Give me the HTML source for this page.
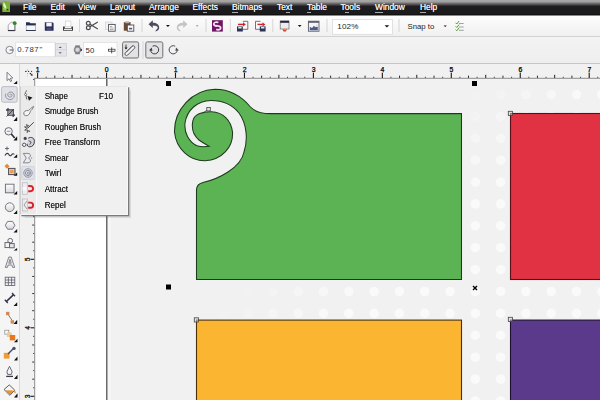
<!DOCTYPE html>
<html><head><meta charset="utf-8">
<style>
*{margin:0;padding:0;box-sizing:border-box}
html,body{width:600px;height:400px;overflow:hidden;background:#efefef;font-family:"Liberation Sans",sans-serif}
.a{position:absolute}
#menubar{left:0;top:0;width:600px;height:15px;background:linear-gradient(#a8a8a8 0px,#a2a2a2 1.5px,#8a8a8a 2.5px,#6c6c6c 3.5px,#524e50 4.5px,#363435 5.5px,#1d1c1e 6.5px,#1b1b1d 13.5px,#111 14.5px)}
.mi{position:absolute;top:2.3px;font-size:8.4px;color:#ececec;line-height:10px;white-space:nowrap;text-shadow:0 0 .3px #fff}
.mi u{text-decoration:none;border-bottom:.8px solid #aaa}
#toolbar{left:0;top:15px;width:600px;height:22px;background:linear-gradient(#fdfdfd,#f0f0f0);border-top:1px solid #8a8a8a;border-bottom:1px solid #d2d2d2}
#propbar{left:0;top:37px;width:600px;height:27px;background:linear-gradient(#f3f3f3,#eeeeee);border-bottom:1px solid #c6c6c6}
#toolbox{left:0;top:64px;width:20px;height:336px;background:#f5f5f5;border-right:1px solid #d8d8d8}
#hruler{left:20px;top:64px;width:580px;height:15px;background:#f1f1f1}
#vruler{left:20px;top:79px;width:14.5px;height:321px;background:#f1f1f1}
#canvas{left:35px;top:79px;width:565px;height:321px;background:#f1f1f1}
#page{left:35px;top:79px;width:71.5px;height:321px;background:#fff}
.ft{position:absolute;left:23.9px;font-size:8.1px;color:#1a1a1a;text-shadow:0 0 .35px rgba(0,0,0,.7);line-height:10px;white-space:nowrap;transform:scaleY(1.1);transform-origin:0 50%}
.btxt{position:absolute;font-size:8.2px;color:#222;line-height:10px;white-space:nowrap}
</style></head><body>
<div id="menubar" class="a">
  <svg class="a" style="left:0;top:0" width="14" height="14" viewBox="0 0 14 14"><path d="M2.3 1h4.6l.6 1.2.8-.9.8 1 .9-.6v10.3H2.3z" fill="#78b038"/><path d="M3.3 2c1.5 1.2 2.8 3.6 3.2 6.2-1.4.4-2.3-.8-3.2-2.3z" fill="#e4f4c4"/><path d="M3.6 8.5c1.5.9 3 .9 4.5.2" stroke="#c8e89a" stroke-width="1" fill="none"/><circle cx="7.4" cy="9.5" r="1" fill="#2a4a10"/></svg>
  <span class="mi" style="left:23px"><u>F</u>ile</span>
  <span class="mi" style="left:50.5px"><u>E</u>dit</span>
  <span class="mi" style="left:78px"><u>V</u>iew</span>
  <span class="mi" style="left:110px"><u>L</u>ayout</span>
  <span class="mi" style="left:149px"><u>A</u>rrange</span>
  <span class="mi" style="left:192.5px">Eff<u>e</u>cts</span>
  <span class="mi" style="left:232px"><u>B</u>itmaps</span>
  <span class="mi" style="left:277px">Te<u>x</u>t</span>
  <span class="mi" style="left:307px"><u>T</u>able</span>
  <span class="mi" style="left:340.5px">T<u>o</u>ols</span>
  <span class="mi" style="left:375px"><u>W</u>indow</span>
  <span class="mi" style="left:420px"><u>H</u>elp</span>
</div>
<div id="toolbar" class="a"></div>
<div id="propbar" class="a"></div>
<div id="toolbox" class="a"></div>
<div id="hruler" class="a"></div>
<div id="vruler" class="a"></div>
<div id="canvas" class="a"></div>
<div id="page" class="a"></div>

<!-- toolbar + propbar icons -->
<svg class="a" style="left:0;top:0" width="600" height="64" viewBox="0 0 600 64">
  <g fill="#d6d6d6">
    <rect x="79" y="19" width="1" height="13"/><rect x="141.5" y="19" width="1" height="13"/>
    <rect x="205.5" y="19" width="1" height="13"/><rect x="229.8" y="19" width="1" height="13"/>
    <rect x="272.3" y="19" width="1" height="13"/><rect x="326.5" y="19" width="1" height="13"/>
    <rect x="398.5" y="19" width="1" height="13"/>
    <rect x="142.5" y="41" width="1" height="18"/>
  </g>
  <!-- new -->
  <path d="M8.2 25l2.9-2.7h3.8v8.4H8.2z" fill="#fafafa" stroke="#8a8a92" stroke-width=".7"/>
  <path d="M8 30.5h7.2" stroke="#34343e" stroke-width="1.1"/>
  <path d="M14.9 25v5.6" stroke="#6a6a72" stroke-width=".8"/>
  <circle cx="14.7" cy="23.2" r="1.9" fill="#2e8a28"/>
  <!-- open -->
  <path d="M26 22.2h3.4l1 1.1h5.4v2.4H26z" fill="#252f4e"/>
  <rect x="26.2" y="25.4" width="9.4" height="5" fill="#f6f6fa" stroke="#8a90a6" stroke-width=".6"/>
  <path d="M26 30.5h9.8" stroke="#34384e" stroke-width="1"/>
  <!-- save -->
  <path d="M44.8 22.3h7.6l1.2 1.2v7.2h-8.8z" fill="#2e2e5c"/>
  <rect x="46.3" y="22.6" width="5.4" height="3.8" fill="#f6f6fa"/>
  <rect x="46.8" y="27.8" width="4.6" height="2.4" fill="#4a4a7a"/>
  <!-- print -->
  <rect x="65.3" y="21" width="5.6" height="5.5" fill="#fdfdfd" stroke="#c8c8c8" stroke-width=".6"/>
  <path d="M63 26.5h1.8v1.7h6.6v-1.7H73v4.2H63z" fill="#3a3a3a"/>
  <rect x="64" y="28.8" width="8" height="1.2" fill="#e8e8e8"/>
  <!-- scissors -->
  <g fill="none" stroke="#4a4a50" stroke-width="1.2">
    <circle cx="88.3" cy="23.3" r="1.9"/><circle cx="88.3" cy="27.7" r="1.9"/>
    <path d="M90 24.3L97.8 29M90 26.7L97.8 22"/>
  </g>
  <!-- copy -->
  <rect x="105.5" y="22" width="6.5" height="7.5" fill="#f2f2f4" stroke="#cfd2da" stroke-width=".7"/>
  <rect x="108.6" y="24.4" width="6.6" height="6.8" fill="#fbfbfb" stroke="#4a4a55" stroke-width=".9"/>
  <path d="M110 26.5h2.2M110 28h3.5M110 29.5h3.5" stroke="#777" stroke-width=".6"/>
  <!-- paste -->
  <rect x="123.8" y="22.2" width="6.8" height="8.5" fill="#6a4a30"/>
  <rect x="125.3" y="21.2" width="3.8" height="2" fill="#b8b8b8"/>
  <rect x="127.3" y="25" width="6.5" height="6.2" fill="#fbfbfb" stroke="#4a4a55" stroke-width=".9"/>
  <rect x="129" y="27.8" width="3.2" height="1.6" fill="#55557a"/>
  <!-- undo -->
  <path d="M148.5 24.2l4.3-4v2.6c3.6 0 6.4 1.8 6.4 4.8 0 2.5-1.6 3.8-4 3.8l1.2-2c1-.3 1.4-1 1.3-1.8-.1-1.4-2-2.2-4.9-2.2v2.6z" fill="#4c4c5e"/>
  <path d="M166 25h3.8l-1.9 1.9z" fill="#111"/>
  <!-- redo -->
  <path d="M187.5 24.2l-4.3-4v2.6c-3.6 0-6.4 1.8-6.4 4.8 0 2.5 1.6 3.8 4 3.8l-1.2-2c-1-.3-1.4-1-1.3-1.8.1-1.4 2-2.2 4.9-2.2v2.6z" fill="#c4c4c8"/>
  <path d="M195.6 25.3h3l-1.5 1.5z" fill="#9a9a9a"/>
  <!-- corel connect -->
  <rect x="212" y="20.2" width="10.8" height="11.4" fill="#701466"/>
  <path d="M218.4 22.6c-1.8-.9-4.6-.6-4.6 1.4 0 1.5 1.4 2 3 2.1" fill="none" stroke="#f6e8f4" stroke-width="1.7"/>
  <path d="M216.2 25.6c1.8.2 4.5.6 4.5 2.4 0 1.8-2.6 2.2-4.4 1.4" fill="none" stroke="#f6e8f4" stroke-width="1.7"/>
  <!-- import -->
  <path d="M242.8 21.3h5v8h-5.5" fill="#fafafa" stroke="#50505a" stroke-width=".8"/>
  <path d="M238 24.4h5.3" stroke="#d0202a" stroke-width="1.4"/><path d="M243 22.2l2.8 2.2-2.8 2.2z" fill="#d0202a"/>
  <rect x="237" y="26.4" width="5.8" height="5.1" fill="#2a3454"/><rect x="238.2" y="26.9" width="3.4" height="1.6" fill="#e8e8f0"/>
  <!-- export -->
  <path d="M260.5 21.3h-5v8h5" fill="#fafafa" stroke="#50505a" stroke-width=".8"/>
  <path d="M257.5 24.4h5.3" stroke="#d0202a" stroke-width="1.4"/><path d="M262.5 22.2l2.8 2.2-2.8 2.2z" fill="#d0202a"/>
  <rect x="259.8" y="26.4" width="5.8" height="5.1" fill="#2a3454"/><rect x="261" y="26.9" width="3.4" height="1.6" fill="#e8e8f0"/>
  <!-- publish pdf -->
  <rect x="280.2" y="21" width="8.8" height="8" fill="#ececf0" stroke="#6a6a70" stroke-width=".7"/>
  <rect x="280.2" y="20.8" width="8.8" height="2" fill="#26263a"/>
  <path d="M282.5 29.2h4.4l-1 2.2h-2.4z" fill="#e83a1a"/><rect x="283.6" y="28.6" width="2.2" height="1.3" fill="#f8a040"/>
  <path d="M297.8 25h3.8l-1.9 1.9z" fill="#111"/>
  <!-- app launcher -->
  <rect x="308.4" y="21.2" width="10.6" height="10" fill="#f4f4f6" stroke="#5a5a66" stroke-width=".9"/>
  <rect x="308.4" y="21.2" width="10.6" height="1.6" fill="#5a5a66"/>
  <path d="M309.8 30.2v-3.5l2.2 1.2 2-2.2 1.2 1.6 2.6-2.2v5.1z" fill="#4a5a8a"/>
  <rect x="315.8" y="24.3" width="2.2" height="2.6" fill="#e4e4ee"/>
  <!-- zoom combo -->
  <rect x="332.5" y="19.5" width="60" height="14.8" fill="#fff" stroke="#dadada" stroke-width=".8"/>
  <path d="M384.6 25.3h4.6l-2.3 2.2z" fill="#111"/>
  <!-- snap arrow -->
  <path d="M443.6 25.4h3.2l-1.6 1.7z" fill="#111"/>
  <!-- checklist -->
  <g stroke="#5a9a3a" stroke-width="1" fill="none">
    <path d="M455.6 22.8l1.2 1.2 2.3-3"/><path d="M455.6 26.3l1.2 1.2 2.3-3"/><path d="M455.6 29.6l1.2 1.2 2.3-3"/>
  </g>
  <g stroke="#8a8a8a" stroke-width=".8"><path d="M459 23.5h4.7M459 27h4.7M459 30.3h4.7"/></g>

  <!-- property bar -->
  <circle cx="9.6" cy="50" r="3.7" fill="#f6f6f8" stroke="#7a7a86" stroke-width=".9"/>
  <path d="M9.6 50h3.6" stroke="#555" stroke-width="1"/>
  <rect x="15.8" y="42.2" width="39.2" height="14.6" fill="#fff" stroke="#d6d6d6" stroke-width=".6"/>
  <rect x="55.4" y="43.5" width="11" height="12.6" fill="#e6e6ea" stroke="#c6c6cc" stroke-width=".6"/>
  <rect x="55.4" y="49.6" width="11" height=".6" fill="#c6c6cc"/>
  <path d="M58.5 48l1.7-1.6 1.7 1.6z" fill="#5a5a66"/><path d="M58.5 52.2l1.7 1.6 1.7-1.6z" fill="#5a5a66"/>
  <!-- stopwatch -->
  <rect x="75.2" y="45.4" width="4.6" height="1.6" fill="#7a7a82"/>
  <rect x="75.2" y="52.6" width="4.6" height="1.6" fill="#7a7a82"/>
  <circle cx="77.5" cy="49.8" r="3.4" fill="#9a9aa2" stroke="#6a6a72" stroke-width=".6"/>
  <circle cx="77.5" cy="49.8" r="2" fill="#d8d8dc"/>
  <rect x="80.6" y="48.8" width="1.2" height="2.2" fill="#222"/>
  <rect x="83.5" y="42.5" width="33.5" height="14" fill="#fff" stroke="#d6d6d6" stroke-width=".6"/>
  <rect x="108.4" y="49.2" width="6.6" height="2" fill="#fff" stroke="#2a2a2a" stroke-width=".7"/>
  <path d="M111.7 47.4v6" stroke="#2a2a2a" stroke-width=".8"/>
  <!-- pressure button -->
  <rect x="122.6" y="41.9" width="16" height="16.1" rx="1.6" fill="#e2e2e4" stroke="#6e6e74" stroke-width="1"/>
  <rect x="123.6" y="49" width="12.5" height="3.2" rx="1.6" fill="#f4f4f6" stroke="#3e3e44" stroke-width=".8" transform="rotate(-45 129.85 50.6)"/>
  <path d="M126.4 52.6l6.6-6.6" stroke="#6a6a70" stroke-width=".6"/>
  <path d="M126 44.6v4" stroke="#222" stroke-width=".9"/><path d="M124.4 47.6l1.6 1.8 1.6-1.8z" fill="#222"/>
  <!-- ccw button -->
  <rect x="145.8" y="41.9" width="17" height="16.1" rx="1.6" fill="#e2e2e4" stroke="#6e6e74" stroke-width="1"/>
  <path d="M150.5 50.2A4.1 4.1 0 1 0 152.6 46.2" fill="none" stroke="#3e3e44" stroke-width="1"/>
  <path d="M149 50.2l2.8-2.6.6 3.4z" fill="#3e3e44"/>
  <!-- cw -->
  <path d="M177.3 50.2A4.1 4.1 0 1 1 175.2 46.2" fill="none" stroke="#4a4a52" stroke-width="1"/>
  <path d="M178.8 50.2l-2.8-2.6-.6 3.4z" fill="#4a4a52"/>
</svg>
<span class="btxt" style="left:337.3px;top:21.6px;font-size:8.1px;letter-spacing:.15px;color:#1a1a1a">102%</span>
<span class="btxt" style="left:407.5px;top:21.8px;font-size:7.75px;color:#1e1e1e">Snap to</span>
<span class="btxt" style="left:17.2px;top:44.8px;font-size:7.8px;color:#333;letter-spacing:.45px">0.787<span style="letter-spacing:0">&#8202;"</span></span>
<span class="btxt" style="left:85.6px;top:45.6px;font-size:7.8px;color:#2a2a2a">50</span>

<!-- rulers -->
<svg class="a" style="left:0;top:0" width="600" height="400" viewBox="0 0 600 400">
  <rect x="34.2" y="77.8" width="566" height="1" fill="#8c8c8c"/>
  <rect x="34.2" y="78" width="1" height="322" fill="#8c8c8c"/>
  <!-- corner icon -->
  <g fill="#222"><rect x="25.1" y="70.9" width="1.5" height="1"/><rect x="28" y="70.9" width="1.2" height="1"/><rect x="31.1" y="70.9" width="1" height="1"/>
  <rect x="27.1" y="69.6" width=".8" height=".8" fill="#888"/><rect x="27.1" y="73.2" width=".8" height=".8" fill="#888"/><rect x="27.1" y="75.4" width=".8" height=".8" fill="#aaa"/>
  <path d="M29.4 73.3l.9-.5 1.9 1.6.1-1 .4 2.3-2.3-.1.9-.5z"/></g>
<rect x="37.05" y="72.7" width="1.1" height="5.3" fill="#1a1a1a"/>
<rect x="45.67" y="76.7" width="1" height="1.3" fill="#555"/>
<rect x="54.29" y="75.6" width="1" height="2.4" fill="#333"/>
<rect x="62.91" y="76.7" width="1" height="1.3" fill="#555"/>
<rect x="71.53" y="74.8" width="1" height="3.2" fill="#222"/>
<rect x="80.14" y="76.7" width="1" height="1.3" fill="#555"/>
<rect x="88.76" y="75.6" width="1" height="2.4" fill="#333"/>
<rect x="97.38" y="76.7" width="1" height="1.3" fill="#555"/>
<rect x="106.00" y="72.7" width="1.1" height="5.3" fill="#1a1a1a"/>
<rect x="114.62" y="76.7" width="1" height="1.3" fill="#555"/>
<rect x="123.24" y="75.6" width="1" height="2.4" fill="#333"/>
<rect x="131.86" y="76.7" width="1" height="1.3" fill="#555"/>
<rect x="140.47" y="74.8" width="1" height="3.2" fill="#222"/>
<rect x="149.09" y="76.7" width="1" height="1.3" fill="#555"/>
<rect x="157.71" y="75.6" width="1" height="2.4" fill="#333"/>
<rect x="166.33" y="76.7" width="1" height="1.3" fill="#555"/>
<rect x="174.95" y="72.7" width="1.1" height="5.3" fill="#1a1a1a"/>
<rect x="183.57" y="76.7" width="1" height="1.3" fill="#555"/>
<rect x="192.19" y="75.6" width="1" height="2.4" fill="#333"/>
<rect x="200.81" y="76.7" width="1" height="1.3" fill="#555"/>
<rect x="209.43" y="74.8" width="1" height="3.2" fill="#222"/>
<rect x="218.04" y="76.7" width="1" height="1.3" fill="#555"/>
<rect x="226.66" y="75.6" width="1" height="2.4" fill="#333"/>
<rect x="235.28" y="76.7" width="1" height="1.3" fill="#555"/>
<rect x="243.90" y="72.7" width="1.1" height="5.3" fill="#1a1a1a"/>
<rect x="252.52" y="76.7" width="1" height="1.3" fill="#555"/>
<rect x="261.14" y="75.6" width="1" height="2.4" fill="#333"/>
<rect x="269.76" y="76.7" width="1" height="1.3" fill="#555"/>
<rect x="278.38" y="74.8" width="1" height="3.2" fill="#222"/>
<rect x="286.99" y="76.7" width="1" height="1.3" fill="#555"/>
<rect x="295.61" y="75.6" width="1" height="2.4" fill="#333"/>
<rect x="304.23" y="76.7" width="1" height="1.3" fill="#555"/>
<rect x="312.85" y="72.7" width="1.1" height="5.3" fill="#1a1a1a"/>
<rect x="321.47" y="76.7" width="1" height="1.3" fill="#555"/>
<rect x="330.09" y="75.6" width="1" height="2.4" fill="#333"/>
<rect x="338.71" y="76.7" width="1" height="1.3" fill="#555"/>
<rect x="347.33" y="74.8" width="1" height="3.2" fill="#222"/>
<rect x="355.94" y="76.7" width="1" height="1.3" fill="#555"/>
<rect x="364.56" y="75.6" width="1" height="2.4" fill="#333"/>
<rect x="373.18" y="76.7" width="1" height="1.3" fill="#555"/>
<rect x="381.80" y="72.7" width="1.1" height="5.3" fill="#1a1a1a"/>
<rect x="390.42" y="76.7" width="1" height="1.3" fill="#555"/>
<rect x="399.04" y="75.6" width="1" height="2.4" fill="#333"/>
<rect x="407.66" y="76.7" width="1" height="1.3" fill="#555"/>
<rect x="416.28" y="74.8" width="1" height="3.2" fill="#222"/>
<rect x="424.89" y="76.7" width="1" height="1.3" fill="#555"/>
<rect x="433.51" y="75.6" width="1" height="2.4" fill="#333"/>
<rect x="442.13" y="76.7" width="1" height="1.3" fill="#555"/>
<rect x="450.75" y="72.7" width="1.1" height="5.3" fill="#1a1a1a"/>
<rect x="459.37" y="76.7" width="1" height="1.3" fill="#555"/>
<rect x="467.99" y="75.6" width="1" height="2.4" fill="#333"/>
<rect x="476.61" y="76.7" width="1" height="1.3" fill="#555"/>
<rect x="485.23" y="74.8" width="1" height="3.2" fill="#222"/>
<rect x="493.84" y="76.7" width="1" height="1.3" fill="#555"/>
<rect x="502.46" y="75.6" width="1" height="2.4" fill="#333"/>
<rect x="511.08" y="76.7" width="1" height="1.3" fill="#555"/>
<rect x="519.70" y="72.7" width="1.1" height="5.3" fill="#1a1a1a"/>
<rect x="528.32" y="76.7" width="1" height="1.3" fill="#555"/>
<rect x="536.94" y="75.6" width="1" height="2.4" fill="#333"/>
<rect x="545.56" y="76.7" width="1" height="1.3" fill="#555"/>
<rect x="554.17" y="74.8" width="1" height="3.2" fill="#222"/>
<rect x="562.79" y="76.7" width="1" height="1.3" fill="#555"/>
<rect x="571.41" y="75.6" width="1" height="2.4" fill="#333"/>
<rect x="580.03" y="76.7" width="1" height="1.3" fill="#555"/>
<rect x="588.65" y="72.7" width="1.1" height="5.3" fill="#1a1a1a"/>
<rect x="597.27" y="76.7" width="1" height="1.3" fill="#555"/>
<text x="37.75" y="72.2" font-size="6.9" fill="#000" stroke="#000" stroke-width=".25" text-anchor="middle">1</text>
<text x="106.70" y="72.2" font-size="6.9" fill="#000" stroke="#000" stroke-width=".25" text-anchor="middle">0</text>
<text x="175.65" y="72.2" font-size="6.9" fill="#000" stroke="#000" stroke-width=".25" text-anchor="middle">1</text>
<text x="244.60" y="72.2" font-size="6.9" fill="#000" stroke="#000" stroke-width=".25" text-anchor="middle">2</text>
<text x="313.55" y="72.2" font-size="6.9" fill="#000" stroke="#000" stroke-width=".25" text-anchor="middle">3</text>
<text x="382.50" y="72.2" font-size="6.9" fill="#000" stroke="#000" stroke-width=".25" text-anchor="middle">4</text>
<text x="451.45" y="72.2" font-size="6.9" fill="#000" stroke="#000" stroke-width=".25" text-anchor="middle">5</text>
<text x="520.40" y="72.2" font-size="6.9" fill="#000" stroke="#000" stroke-width=".25" text-anchor="middle">6</text>
<text x="589.35" y="72.2" font-size="6.9" fill="#000" stroke="#000" stroke-width=".25" text-anchor="middle">7</text>
<rect x="33" y="78.99" width="1.2" height="1" fill="#555"/>
<rect x="32.2" y="87.55" width="2" height="1" fill="#333"/>
<rect x="33" y="96.11" width="1.2" height="1" fill="#555"/>
<rect x="32.2" y="104.68" width="2" height="1" fill="#333"/>
<rect x="33" y="113.24" width="1.2" height="1" fill="#555"/>
<rect x="30.6" y="121.75" width="3.6" height="1.1" fill="#1a1a1a"/>
<rect x="33" y="130.36" width="1.2" height="1" fill="#555"/>
<rect x="32.2" y="138.93" width="2" height="1" fill="#333"/>
<rect x="33" y="147.49" width="1.2" height="1" fill="#555"/>
<rect x="32.2" y="156.05" width="2" height="1" fill="#333"/>
<rect x="33" y="164.61" width="1.2" height="1" fill="#555"/>
<rect x="32.2" y="173.18" width="2" height="1" fill="#333"/>
<rect x="33" y="181.74" width="1.2" height="1" fill="#555"/>
<rect x="30.6" y="190.25" width="3.6" height="1.1" fill="#1a1a1a"/>
<rect x="33" y="198.86" width="1.2" height="1" fill="#555"/>
<rect x="32.2" y="207.43" width="2" height="1" fill="#333"/>
<rect x="33" y="215.99" width="1.2" height="1" fill="#555"/>
<rect x="32.2" y="224.55" width="2" height="1" fill="#333"/>
<rect x="33" y="233.11" width="1.2" height="1" fill="#555"/>
<rect x="32.2" y="241.68" width="2" height="1" fill="#333"/>
<rect x="33" y="250.24" width="1.2" height="1" fill="#555"/>
<rect x="30.6" y="258.75" width="3.6" height="1.1" fill="#1a1a1a"/>
<rect x="33" y="267.36" width="1.2" height="1" fill="#555"/>
<rect x="32.2" y="275.93" width="2" height="1" fill="#333"/>
<rect x="33" y="284.49" width="1.2" height="1" fill="#555"/>
<rect x="32.2" y="293.05" width="2" height="1" fill="#333"/>
<rect x="33" y="301.61" width="1.2" height="1" fill="#555"/>
<rect x="32.2" y="310.18" width="2" height="1" fill="#333"/>
<rect x="33" y="318.74" width="1.2" height="1" fill="#555"/>
<rect x="30.6" y="327.25" width="3.6" height="1.1" fill="#1a1a1a"/>
<rect x="33" y="335.86" width="1.2" height="1" fill="#555"/>
<rect x="32.2" y="344.43" width="2" height="1" fill="#333"/>
<rect x="33" y="352.99" width="1.2" height="1" fill="#555"/>
<rect x="32.2" y="361.55" width="2" height="1" fill="#333"/>
<rect x="33" y="370.11" width="1.2" height="1" fill="#555"/>
<rect x="32.2" y="378.68" width="2" height="1" fill="#333"/>
<rect x="33" y="387.24" width="1.2" height="1" fill="#555"/>
<rect x="30.6" y="395.75" width="3.6" height="1.1" fill="#1a1a1a"/>
<text transform="translate(30.3 396.30) rotate(-90)" font-size="6.7" fill="#000" stroke="#000" stroke-width=".25" text-anchor="middle">3</text>
<text transform="translate(30.3 327.80) rotate(-90)" font-size="6.7" fill="#000" stroke="#000" stroke-width=".25" text-anchor="middle">4</text>
<text transform="translate(30.3 259.30) rotate(-90)" font-size="6.7" fill="#000" stroke="#000" stroke-width=".25" text-anchor="middle">5</text>
<text transform="translate(30.3 190.80) rotate(-90)" font-size="6.7" fill="#000" stroke="#000" stroke-width=".25" text-anchor="middle">6</text>
<text transform="translate(30.3 122.30) rotate(-90)" font-size="6.7" fill="#000" stroke="#000" stroke-width=".25" text-anchor="middle">7</text>
</svg>

<!-- canvas -->
<svg class="a" style="left:0;top:0" width="600" height="400" viewBox="0 0 600 400">
  <defs>
    <linearGradient id="dg" gradientUnits="userSpaceOnUse" x1="242.8" y1="281.7" x2="298.3" y2="346">
      <stop offset="0" stop-color="#fff" stop-opacity="0"/>
      <stop offset="1" stop-color="#fff" stop-opacity="1"/>
    </linearGradient>
    <filter id="db" x="-10%" y="-10%" width="120%" height="120%"><feGaussianBlur stdDeviation="0.6"/></filter>
    <mask id="dm"><rect x="0" y="0" width="600" height="400" fill="url(#dg)"/></mask>
  </defs>
  <g fill="#fff" fill-opacity=".62" mask="url(#dm)" filter="url(#db)">
<circle cx="222.3" cy="94.5" r="4.8"/>
<circle cx="247.6" cy="94.5" r="4.8"/>
<circle cx="272.9" cy="94.5" r="4.8"/>
<circle cx="298.2" cy="94.5" r="4.8"/>
<circle cx="323.5" cy="94.5" r="4.8"/>
<circle cx="348.8" cy="94.5" r="4.8"/>
<circle cx="374.1" cy="94.5" r="4.8"/>
<circle cx="399.4" cy="94.5" r="4.8"/>
<circle cx="424.7" cy="94.5" r="4.8"/>
<circle cx="450.0" cy="94.5" r="4.8"/>
<circle cx="475.3" cy="94.5" r="4.8"/>
<circle cx="500.6" cy="94.5" r="4.8"/>
<circle cx="525.9" cy="94.5" r="4.8"/>
<circle cx="551.2" cy="94.5" r="4.8"/>
<circle cx="576.5" cy="94.5" r="4.8"/>
<circle cx="601.8" cy="94.5" r="4.8"/>
<circle cx="222.3" cy="116.4" r="4.8"/>
<circle cx="247.6" cy="116.4" r="4.8"/>
<circle cx="272.9" cy="116.4" r="4.8"/>
<circle cx="298.2" cy="116.4" r="4.8"/>
<circle cx="323.5" cy="116.4" r="4.8"/>
<circle cx="348.8" cy="116.4" r="4.8"/>
<circle cx="374.1" cy="116.4" r="4.8"/>
<circle cx="399.4" cy="116.4" r="4.8"/>
<circle cx="424.7" cy="116.4" r="4.8"/>
<circle cx="450.0" cy="116.4" r="4.8"/>
<circle cx="475.3" cy="116.4" r="4.8"/>
<circle cx="500.6" cy="116.4" r="4.8"/>
<circle cx="525.9" cy="116.4" r="4.8"/>
<circle cx="551.2" cy="116.4" r="4.8"/>
<circle cx="576.5" cy="116.4" r="4.8"/>
<circle cx="601.8" cy="116.4" r="4.8"/>
<circle cx="222.3" cy="138.3" r="4.8"/>
<circle cx="247.6" cy="138.3" r="4.8"/>
<circle cx="272.9" cy="138.3" r="4.8"/>
<circle cx="298.2" cy="138.3" r="4.8"/>
<circle cx="323.5" cy="138.3" r="4.8"/>
<circle cx="348.8" cy="138.3" r="4.8"/>
<circle cx="374.1" cy="138.3" r="4.8"/>
<circle cx="399.4" cy="138.3" r="4.8"/>
<circle cx="424.7" cy="138.3" r="4.8"/>
<circle cx="450.0" cy="138.3" r="4.8"/>
<circle cx="475.3" cy="138.3" r="4.8"/>
<circle cx="500.6" cy="138.3" r="4.8"/>
<circle cx="525.9" cy="138.3" r="4.8"/>
<circle cx="551.2" cy="138.3" r="4.8"/>
<circle cx="576.5" cy="138.3" r="4.8"/>
<circle cx="601.8" cy="138.3" r="4.8"/>
<circle cx="222.3" cy="160.2" r="4.8"/>
<circle cx="247.6" cy="160.2" r="4.8"/>
<circle cx="272.9" cy="160.2" r="4.8"/>
<circle cx="298.2" cy="160.2" r="4.8"/>
<circle cx="323.5" cy="160.2" r="4.8"/>
<circle cx="348.8" cy="160.2" r="4.8"/>
<circle cx="374.1" cy="160.2" r="4.8"/>
<circle cx="399.4" cy="160.2" r="4.8"/>
<circle cx="424.7" cy="160.2" r="4.8"/>
<circle cx="450.0" cy="160.2" r="4.8"/>
<circle cx="475.3" cy="160.2" r="4.8"/>
<circle cx="500.6" cy="160.2" r="4.8"/>
<circle cx="525.9" cy="160.2" r="4.8"/>
<circle cx="551.2" cy="160.2" r="4.8"/>
<circle cx="576.5" cy="160.2" r="4.8"/>
<circle cx="601.8" cy="160.2" r="4.8"/>
<circle cx="222.3" cy="182.1" r="4.8"/>
<circle cx="247.6" cy="182.1" r="4.8"/>
<circle cx="272.9" cy="182.1" r="4.8"/>
<circle cx="298.2" cy="182.1" r="4.8"/>
<circle cx="323.5" cy="182.1" r="4.8"/>
<circle cx="348.8" cy="182.1" r="4.8"/>
<circle cx="374.1" cy="182.1" r="4.8"/>
<circle cx="399.4" cy="182.1" r="4.8"/>
<circle cx="424.7" cy="182.1" r="4.8"/>
<circle cx="450.0" cy="182.1" r="4.8"/>
<circle cx="475.3" cy="182.1" r="4.8"/>
<circle cx="500.6" cy="182.1" r="4.8"/>
<circle cx="525.9" cy="182.1" r="4.8"/>
<circle cx="551.2" cy="182.1" r="4.8"/>
<circle cx="576.5" cy="182.1" r="4.8"/>
<circle cx="601.8" cy="182.1" r="4.8"/>
<circle cx="222.3" cy="203.9" r="4.8"/>
<circle cx="247.6" cy="203.9" r="4.8"/>
<circle cx="272.9" cy="203.9" r="4.8"/>
<circle cx="298.2" cy="203.9" r="4.8"/>
<circle cx="323.5" cy="203.9" r="4.8"/>
<circle cx="348.8" cy="203.9" r="4.8"/>
<circle cx="374.1" cy="203.9" r="4.8"/>
<circle cx="399.4" cy="203.9" r="4.8"/>
<circle cx="424.7" cy="203.9" r="4.8"/>
<circle cx="450.0" cy="203.9" r="4.8"/>
<circle cx="475.3" cy="203.9" r="4.8"/>
<circle cx="500.6" cy="203.9" r="4.8"/>
<circle cx="525.9" cy="203.9" r="4.8"/>
<circle cx="551.2" cy="203.9" r="4.8"/>
<circle cx="576.5" cy="203.9" r="4.8"/>
<circle cx="601.8" cy="203.9" r="4.8"/>
<circle cx="222.3" cy="225.8" r="4.8"/>
<circle cx="247.6" cy="225.8" r="4.8"/>
<circle cx="272.9" cy="225.8" r="4.8"/>
<circle cx="298.2" cy="225.8" r="4.8"/>
<circle cx="323.5" cy="225.8" r="4.8"/>
<circle cx="348.8" cy="225.8" r="4.8"/>
<circle cx="374.1" cy="225.8" r="4.8"/>
<circle cx="399.4" cy="225.8" r="4.8"/>
<circle cx="424.7" cy="225.8" r="4.8"/>
<circle cx="450.0" cy="225.8" r="4.8"/>
<circle cx="475.3" cy="225.8" r="4.8"/>
<circle cx="500.6" cy="225.8" r="4.8"/>
<circle cx="525.9" cy="225.8" r="4.8"/>
<circle cx="551.2" cy="225.8" r="4.8"/>
<circle cx="576.5" cy="225.8" r="4.8"/>
<circle cx="601.8" cy="225.8" r="4.8"/>
<circle cx="222.3" cy="247.7" r="4.8"/>
<circle cx="247.6" cy="247.7" r="4.8"/>
<circle cx="272.9" cy="247.7" r="4.8"/>
<circle cx="298.2" cy="247.7" r="4.8"/>
<circle cx="323.5" cy="247.7" r="4.8"/>
<circle cx="348.8" cy="247.7" r="4.8"/>
<circle cx="374.1" cy="247.7" r="4.8"/>
<circle cx="399.4" cy="247.7" r="4.8"/>
<circle cx="424.7" cy="247.7" r="4.8"/>
<circle cx="450.0" cy="247.7" r="4.8"/>
<circle cx="475.3" cy="247.7" r="4.8"/>
<circle cx="500.6" cy="247.7" r="4.8"/>
<circle cx="525.9" cy="247.7" r="4.8"/>
<circle cx="551.2" cy="247.7" r="4.8"/>
<circle cx="576.5" cy="247.7" r="4.8"/>
<circle cx="601.8" cy="247.7" r="4.8"/>
<circle cx="222.3" cy="269.6" r="4.8"/>
<circle cx="247.6" cy="269.6" r="4.8"/>
<circle cx="272.9" cy="269.6" r="4.8"/>
<circle cx="298.2" cy="269.6" r="4.8"/>
<circle cx="323.5" cy="269.6" r="4.8"/>
<circle cx="348.8" cy="269.6" r="4.8"/>
<circle cx="374.1" cy="269.6" r="4.8"/>
<circle cx="399.4" cy="269.6" r="4.8"/>
<circle cx="424.7" cy="269.6" r="4.8"/>
<circle cx="450.0" cy="269.6" r="4.8"/>
<circle cx="475.3" cy="269.6" r="4.8"/>
<circle cx="500.6" cy="269.6" r="4.8"/>
<circle cx="525.9" cy="269.6" r="4.8"/>
<circle cx="551.2" cy="269.6" r="4.8"/>
<circle cx="576.5" cy="269.6" r="4.8"/>
<circle cx="601.8" cy="269.6" r="4.8"/>
<circle cx="222.3" cy="291.5" r="4.8"/>
<circle cx="247.6" cy="291.5" r="4.8"/>
<circle cx="272.9" cy="291.5" r="4.8"/>
<circle cx="298.2" cy="291.5" r="4.8"/>
<circle cx="323.5" cy="291.5" r="4.8"/>
<circle cx="348.8" cy="291.5" r="4.8"/>
<circle cx="374.1" cy="291.5" r="4.8"/>
<circle cx="399.4" cy="291.5" r="4.8"/>
<circle cx="424.7" cy="291.5" r="4.8"/>
<circle cx="450.0" cy="291.5" r="4.8"/>
<circle cx="475.3" cy="291.5" r="4.8"/>
<circle cx="500.6" cy="291.5" r="4.8"/>
<circle cx="525.9" cy="291.5" r="4.8"/>
<circle cx="551.2" cy="291.5" r="4.8"/>
<circle cx="576.5" cy="291.5" r="4.8"/>
<circle cx="601.8" cy="291.5" r="4.8"/>
<circle cx="222.3" cy="313.4" r="4.8"/>
<circle cx="247.6" cy="313.4" r="4.8"/>
<circle cx="272.9" cy="313.4" r="4.8"/>
<circle cx="298.2" cy="313.4" r="4.8"/>
<circle cx="323.5" cy="313.4" r="4.8"/>
<circle cx="348.8" cy="313.4" r="4.8"/>
<circle cx="374.1" cy="313.4" r="4.8"/>
<circle cx="399.4" cy="313.4" r="4.8"/>
<circle cx="424.7" cy="313.4" r="4.8"/>
<circle cx="450.0" cy="313.4" r="4.8"/>
<circle cx="475.3" cy="313.4" r="4.8"/>
<circle cx="500.6" cy="313.4" r="4.8"/>
<circle cx="525.9" cy="313.4" r="4.8"/>
<circle cx="551.2" cy="313.4" r="4.8"/>
<circle cx="576.5" cy="313.4" r="4.8"/>
<circle cx="601.8" cy="313.4" r="4.8"/>
<circle cx="222.3" cy="335.3" r="4.8"/>
<circle cx="247.6" cy="335.3" r="4.8"/>
<circle cx="272.9" cy="335.3" r="4.8"/>
<circle cx="298.2" cy="335.3" r="4.8"/>
<circle cx="323.5" cy="335.3" r="4.8"/>
<circle cx="348.8" cy="335.3" r="4.8"/>
<circle cx="374.1" cy="335.3" r="4.8"/>
<circle cx="399.4" cy="335.3" r="4.8"/>
<circle cx="424.7" cy="335.3" r="4.8"/>
<circle cx="450.0" cy="335.3" r="4.8"/>
<circle cx="475.3" cy="335.3" r="4.8"/>
<circle cx="500.6" cy="335.3" r="4.8"/>
<circle cx="525.9" cy="335.3" r="4.8"/>
<circle cx="551.2" cy="335.3" r="4.8"/>
<circle cx="576.5" cy="335.3" r="4.8"/>
<circle cx="601.8" cy="335.3" r="4.8"/>
<circle cx="222.3" cy="357.2" r="4.8"/>
<circle cx="247.6" cy="357.2" r="4.8"/>
<circle cx="272.9" cy="357.2" r="4.8"/>
<circle cx="298.2" cy="357.2" r="4.8"/>
<circle cx="323.5" cy="357.2" r="4.8"/>
<circle cx="348.8" cy="357.2" r="4.8"/>
<circle cx="374.1" cy="357.2" r="4.8"/>
<circle cx="399.4" cy="357.2" r="4.8"/>
<circle cx="424.7" cy="357.2" r="4.8"/>
<circle cx="450.0" cy="357.2" r="4.8"/>
<circle cx="475.3" cy="357.2" r="4.8"/>
<circle cx="500.6" cy="357.2" r="4.8"/>
<circle cx="525.9" cy="357.2" r="4.8"/>
<circle cx="551.2" cy="357.2" r="4.8"/>
<circle cx="576.5" cy="357.2" r="4.8"/>
<circle cx="601.8" cy="357.2" r="4.8"/>
<circle cx="222.3" cy="379.1" r="4.8"/>
<circle cx="247.6" cy="379.1" r="4.8"/>
<circle cx="272.9" cy="379.1" r="4.8"/>
<circle cx="298.2" cy="379.1" r="4.8"/>
<circle cx="323.5" cy="379.1" r="4.8"/>
<circle cx="348.8" cy="379.1" r="4.8"/>
<circle cx="374.1" cy="379.1" r="4.8"/>
<circle cx="399.4" cy="379.1" r="4.8"/>
<circle cx="424.7" cy="379.1" r="4.8"/>
<circle cx="450.0" cy="379.1" r="4.8"/>
<circle cx="475.3" cy="379.1" r="4.8"/>
<circle cx="500.6" cy="379.1" r="4.8"/>
<circle cx="525.9" cy="379.1" r="4.8"/>
<circle cx="551.2" cy="379.1" r="4.8"/>
<circle cx="576.5" cy="379.1" r="4.8"/>
<circle cx="601.8" cy="379.1" r="4.8"/>
<circle cx="222.3" cy="400.9" r="4.8"/>
<circle cx="247.6" cy="400.9" r="4.8"/>
<circle cx="272.9" cy="400.9" r="4.8"/>
<circle cx="298.2" cy="400.9" r="4.8"/>
<circle cx="323.5" cy="400.9" r="4.8"/>
<circle cx="348.8" cy="400.9" r="4.8"/>
<circle cx="374.1" cy="400.9" r="4.8"/>
<circle cx="399.4" cy="400.9" r="4.8"/>
<circle cx="424.7" cy="400.9" r="4.8"/>
<circle cx="450.0" cy="400.9" r="4.8"/>
<circle cx="475.3" cy="400.9" r="4.8"/>
<circle cx="500.6" cy="400.9" r="4.8"/>
<circle cx="525.9" cy="400.9" r="4.8"/>
<circle cx="551.2" cy="400.9" r="4.8"/>
<circle cx="576.5" cy="400.9" r="4.8"/>
<circle cx="601.8" cy="400.9" r="4.8"/>
<circle cx="222.3" cy="422.8" r="4.8"/>
<circle cx="247.6" cy="422.8" r="4.8"/>
<circle cx="272.9" cy="422.8" r="4.8"/>
<circle cx="298.2" cy="422.8" r="4.8"/>
<circle cx="323.5" cy="422.8" r="4.8"/>
<circle cx="348.8" cy="422.8" r="4.8"/>
<circle cx="374.1" cy="422.8" r="4.8"/>
<circle cx="399.4" cy="422.8" r="4.8"/>
<circle cx="424.7" cy="422.8" r="4.8"/>
<circle cx="450.0" cy="422.8" r="4.8"/>
<circle cx="475.3" cy="422.8" r="4.8"/>
<circle cx="500.6" cy="422.8" r="4.8"/>
<circle cx="525.9" cy="422.8" r="4.8"/>
<circle cx="551.2" cy="422.8" r="4.8"/>
<circle cx="576.5" cy="422.8" r="4.8"/>
<circle cx="601.8" cy="422.8" r="4.8"/>
<circle cx="222.3" cy="444.7" r="4.8"/>
<circle cx="247.6" cy="444.7" r="4.8"/>
<circle cx="272.9" cy="444.7" r="4.8"/>
<circle cx="298.2" cy="444.7" r="4.8"/>
<circle cx="323.5" cy="444.7" r="4.8"/>
<circle cx="348.8" cy="444.7" r="4.8"/>
<circle cx="374.1" cy="444.7" r="4.8"/>
<circle cx="399.4" cy="444.7" r="4.8"/>
<circle cx="424.7" cy="444.7" r="4.8"/>
<circle cx="450.0" cy="444.7" r="4.8"/>
<circle cx="475.3" cy="444.7" r="4.8"/>
<circle cx="500.6" cy="444.7" r="4.8"/>
<circle cx="525.9" cy="444.7" r="4.8"/>
<circle cx="551.2" cy="444.7" r="4.8"/>
<circle cx="576.5" cy="444.7" r="4.8"/>
<circle cx="601.8" cy="444.7" r="4.8"/>
  </g>
  <rect x="107.5" y="79" width="3.5" height="321" fill="#f6f6f6"/><rect x="106" y="79" width="1.5" height="321" fill="#6a6a6a"/>
  <path d="M196.5 279.5 L196.5 190 C196.5 185 199 183.5 203 182.5 C218 179 241 168 244 152 C248 140 247 124 239 113 C231 103 220 100.5 211 100.5 C197 100.8 187 110 185 123 C184 133 189 142 197 145.8 C201 147 206 146.8 209.2 146.3 C208 145.5 203 143 199 140 C193.5 135.5 191.5 128 192.8 121 C194 114.5 202 111.5 211.5 111.8 C223 112.2 231 120 232.5 132 C233.5 147 222 160 205 160.8 C190 161 176 149 174.5 132 C174 110 192 90 215 89.3 C231 89.3 242.5 97.5 250.5 107 C256 112.5 262 113.6 270 113.6 L461.5 113.5 L461.5 279.5 Z" fill="#5cb353" stroke="#1e3a1e" stroke-width="1.05"/>
  <rect x="510.5" y="113.5" width="95" height="166" fill="#e03242" stroke="#5a1018" stroke-width="1.1"/>
  <rect x="196.5" y="320.1" width="265" height="90" fill="#fbb531" stroke="#4a3208" stroke-width="1.1"/>
  <rect x="510.5" y="320.1" width="95" height="90" fill="#5b3a8c" stroke="#1e1030" stroke-width="1.1"/>
  <!-- node markers -->
  <path d="M202.8 113.4l4.2-3.2" stroke="#333" stroke-width=".8"/>
  <rect x="206.8" y="107.4" width="3.5" height="3.5" fill="#d8d8d8" fill-opacity=".5" stroke="#444" stroke-width=".8"/>
  <rect x="508.3" y="111.3" width="4.2" height="4.2" fill="#d8d8d8" fill-opacity=".5" stroke="#444" stroke-width=".8"/>
  <rect x="508.3" y="317.3" width="4.2" height="4.2" fill="#d8d8d8" fill-opacity=".5" stroke="#444" stroke-width=".8"/>
  <rect x="194.3" y="317.8" width="4.2" height="4.2" fill="#d8d8d8" fill-opacity=".5" stroke="#444" stroke-width=".8"/>
  <rect x="166" y="81" width="5" height="5" fill="#000"/>
  <rect x="472" y="81" width="5" height="5" fill="#000"/>
  <rect x="166" y="284.5" width="5" height="5" fill="#000"/>
  <path d="M473 286l4 4M477 286l-4 4" stroke="#000" stroke-width="1.4"/>
</svg>

<!-- toolbox icons -->
<svg class="a" style="left:0;top:63px" width="21" height="337" viewBox="0 63 21 337">
  <defs><linearGradient id="tg" x1="0" y1="0" x2="0" y2="1"><stop offset="0" stop-color="#fdfdfd"/><stop offset="1" stop-color="#d8d8dc"/></linearGradient></defs>
  <g fill="#111">
    <path d="M13.5 84l3.7-3.3v3.3z"/><path d="M12.8 101.5l3.7-3.5v3.5z"/><path d="M13.5 121l3.7-4.2v4.2z"/><path d="M13.5 140.5l3.7-4.2v4.2z"/>
    <path d="M13.5 157.7l3.7-3.5v3.5z"/><path d="M13.5 175.7l3.7-3.2v3.2z"/><path d="M13.5 194.5l3.7-3.6v3.6z"/><path d="M13.5 214l3.7-3.8v3.8z"/>
    <path d="M13.5 232.5l3.7-3.6v3.6z"/><path d="M13.7 250.6l3.4-2.6v2.6z"/>
    <path d="M13.5 306l3.7-3.8v3.8z"/><path d="M13.5 324l3.7-4.2v4.2z"/><path d="M14 342.2l3.5-3.4v3.4z"/><path d="M14 360.6l3.5-4.2v4.2z"/>
    <path d="M14 379l3.5-4.2v4.2z"/><path d="M14 397.5l3.5-4.2v4.2z"/>
  </g>
  <!-- pick -->
  <path d="M7 72.3v8.3l2-1.8 1.5 2.8 1.2-.6-1.4-2.7 2.6-.3z" fill="#f8f8fa" stroke="#60606a" stroke-width=".8"/>
  <!-- shape pressed -->
  <rect x="1.6" y="86.6" width="15.6" height="15.6" rx="1.6" fill="#dfe1e7" stroke="#aeb1bb" stroke-width=".8"/>
  <path d="M9.9 95.2c0-.9.7-1.3 1.3-1.1.9.3 1.1 1.6.4 2.4-1 1-2.8.7-3.5-.5-.9-1.5 0-3.5 1.8-3.9 2.2-.5 4.3 1.2 4.3 3.5 0 2.6-2.4 4.4-4.9 4-2.8-.4-4.4-3.2-3.7-5.9" fill="none" stroke="#80848e" stroke-width=".85"/>
  <!-- crop -->
  <path d="M8 108v7.2h7" fill="none" stroke="#3a3a44" stroke-width="1.3"/>
  <path d="M6 110h7.2v7" fill="none" stroke="#3a3a44" stroke-width="1.3"/>
  <rect x="8.4" y="110.6" width="4.2" height="4.2" fill="#9a9aa8"/>
  <path d="M6.5 116.5l7.5-7.5" stroke="#3a3a44" stroke-width=".9"/>
  <!-- zoom -->
  <circle cx="8.6" cy="131.3" r="3.7" fill="#f2f2f4" stroke="#5a5a64" stroke-width=".9"/>
  <path d="M6.8 131.3h3.6" stroke="#8a8a94" stroke-width=".9"/>
  <path d="M11.3 134l3.4 4" stroke="#2a2a34" stroke-width="1.6"/>
  <!-- freehand -->
  <path d="M5 148.5h4M7 146.5v4" stroke="#4a4a54" stroke-width=".8"/>
  <path d="M5 155.5c1.5-2.8 2.8-2.6 3.8-1 .9 1.6 1.8 1.9 3 .1.7-1 1.6-1 2.6-.2" fill="none" stroke="#3a3a44" stroke-width="1.1"/>
  <!-- smart fill -->
  <rect x="5.2" y="164.4" width="3.6" height="3.6" fill="#e08a3a" transform="rotate(45 7 166.2)"/>
  <rect x="8.6" y="168.4" width="6.4" height="6.2" fill="#f2c79a" stroke="#4a4a54" stroke-width="1"/>
  <rect x="10.2" y="170" width="3.2" height="3" fill="#e89a50"/>
  <!-- rectangle -->
  <rect x="5.4" y="184.2" width="8.6" height="8.6" fill="url(#tg)" stroke="#6a6a74" stroke-width=".9"/>
  <!-- ellipse -->
  <circle cx="9.7" cy="207.2" r="4.4" fill="url(#tg)" stroke="#6a6a74" stroke-width=".9"/>
  <!-- polygon -->
  <path d="M7.6 221.4h5l2.3 3.9-2.3 3.9h-5l-2.3-3.9z" fill="url(#tg)" stroke="#6a6a74" stroke-width=".9"/>
  <!-- basic shapes -->
  <circle cx="10.2" cy="240.8" r="2.4" fill="#f4f4f6" stroke="#5a5a64" stroke-width=".9"/>
  <rect x="5" y="242.6" width="5" height="5" fill="#f4f4f6" stroke="#5a5a64" stroke-width=".9"/>
  <rect x="9.6" y="243.6" width="4.6" height="4.2" fill="#e4e4e8" stroke="#5a5a64" stroke-width=".9"/>
  <!-- text -->
  <path d="M5.3 267.4l3.5-10.4h2.4l3.5 10.4h-2.1l-.8-2.4H8.2l-.8 2.4zM8.8 263.2h2.4l-1.2-3.8z" fill="#e8e8ec" stroke="#6a6a74" stroke-width=".8"/>
  <!-- table -->
  <g fill="none" stroke="#5a5a6a" stroke-width=".8"><rect x="5.2" y="277.2" width="9.6" height="8.2" fill="#f6f6f8"/><path d="M8.4 277.2v8.2M11.6 277.2v8.2M5.2 280h9.6M5.2 282.7h9.6"/></g>
  <!-- dimension -->
  <path d="M6.2 301.6l7.4-7" stroke="#33334a" stroke-width="1.5"/>
  <path d="M4.8 299.8l3 3.2M12 293l3 3.2" stroke="#33334a" stroke-width="1.3"/>
  <!-- connector -->
  <rect x="6" y="311.8" width="3.4" height="3.4" fill="#d08a58"/>
  <rect x="10.6" y="320.2" width="3.4" height="3.4" fill="#d08a58"/>
  <path d="M8.5 315l3.3 5" stroke="#5a5a64" stroke-width=".8"/>
  <!-- blend -->
  <rect x="4.8" y="330.2" width="4" height="4" fill="#fafafa" stroke="#888" stroke-width=".7"/>
  <rect x="7" y="332.4" width="4.6" height="4.6" fill="#f2c89a"/>
  <rect x="9.8" y="335" width="5.4" height="5.4" fill="#e8761e"/>
  <!-- eyedropper -->
  <rect x="3.8" y="352.8" width="5.8" height="5.8" fill="#f09a38"/>
  <path d="M8 354l5.2-5.2" stroke="#4a4e6a" stroke-width="1.5"/>
  <circle cx="14" cy="348.4" r="1.7" fill="#4a4e6a"/>
  <!-- outline pen -->
  <path d="M9.5 366.3l-2.6 5.4.7 2.7h3.8l.7-2.7z" fill="#f4f4f6" stroke="#5a5a64" stroke-width=".9"/>
  <path d="M6.2 376.4h6.8" stroke="#3a3a44" stroke-width="1.3"/>
  <!-- fill -->
  <path d="M4 389.5l5.3-4.6 5.4 5.2-4.8 5.2z" fill="#f6f6f8" stroke="#4a4a54" stroke-width=".9"/>
  <path d="M5.4 390.2l8.4.2-4 4.3z" fill="#e8902e"/>
  <path d="M14.5 390.5l.8 2.6" stroke="#e8902e" stroke-width="1.2"/>
</svg>

<!-- flyout -->
<div class="a" style="left:19.8px;top:86.4px;width:108.2px;height:128.8px;background:#f0f0f0;border:1px solid #cfcfcf;border-top-color:#e6e6e6;border-right-color:#f8f8f8;border-bottom-color:#f8f8f8;box-shadow:1.3px 1.3px 0 #7a7a7a,2.5px 2.5px 1px rgba(0,0,0,.1)">
  <div class="a" style="left:0;top:0;width:16.7px;height:127px;background:#eaeaea;border-right:1px solid #f8f8f8"></div>
  <svg class="a" style="left:-20.8px;top:-87.4px" width="130" height="220" viewBox="0 0 130 220">
    <!-- shape -->
    <path d="M27 90.5c-1.8 1-2 2.8-1.2 4.5l1 4.5" fill="none" stroke="#444" stroke-width=".8"/>
    <circle cx="25.6" cy="94.5" r="1" fill="#fff" stroke="#444" stroke-width=".6"/>
    <path d="M27.5 96l5 1.5-3.5 3.3z" fill="#1a1a1a"/>
    <!-- smudge -->
    <path d="M33.6 106.4C31.6 107.6 29.6 109.4 28.3 110.6 25.8 110 23.5 111.6 23.8 114 24.1 116 26.8 116.3 28.5 114.8 29.8 113.6 30.2 112.3 30 111.6 31.5 110.3 33.2 108.3 33.6 106.4z" fill="#f6f6f6" stroke="#5a5a5a" stroke-width=".75"/>
    <!-- roughen -->
    <path d="M33.8 122.2L27.5 128.4" stroke="#4a4a50" stroke-width="1"/>
    <path d="M29.5 126.2l-3.2-1.6 1.4 2.6-3.2-.4 2.4 1.8-2.2 1.6 3-.2-.6 2.6 1.8-2.2.8 1.6" fill="none" stroke="#4a4a50" stroke-width=".9"/>
    <!-- free transform -->
    <circle cx="25.2" cy="138.4" r="1.6" fill="#44444c"/>
    <circle cx="24.2" cy="144.8" r="1.7" fill="#f4f4f6" stroke="#44444c" stroke-width=".9"/>
    <path d="M28.2 138.2c2.6-1.6 6.2-.8 6.2 3.2 0 3.6-2.2 5.4-4.6 5.4-2 0-3-1.4-2.6-3" fill="#d4d4da" stroke="#3a3a44" stroke-width="1"/>
    <path d="M28.6 140.6l2.6 1.4-1.4 2.6" fill="none" stroke="#3a3a44" stroke-width=".8"/>
    <!-- smear -->
    <path d="M23.3 153.4H28c2 0 2.5 1.6 2.5 2.6L28.6 158l1.9 2c0 1.5-.5 2.8-2.5 2.8h-4.7l3-4.8z" fill="#ececf0" stroke="#7a7a84" stroke-width=".9"/>
    <path d="M31 157l1.6 1-1.6 1z" fill="#9a9aa4"/>
    <!-- twirl box -->
    <rect x="21.8" y="166.5" width="12.5" height="13" rx="1" fill="#dfe2ea" stroke="#c4c8d2" stroke-width=".6"/>
    <g fill="none" stroke="#7a7e8a" stroke-width=".8"><circle cx="28" cy="173" r="4.2"/><circle cx="28" cy="173" r="2.6"/><circle cx="28.4" cy="173.2" r="1.1"/></g>
    <!-- attract -->
    <rect x="22.5" y="182.8" width="5" height="11.8" fill="#ececf0" stroke="#b0b0b8" stroke-width=".6"/>
    <rect x="22.5" y="187" width="4" height="3.5" fill="#f8f8fa"/>
    <path d="M28.2 186h2.3a2.6 2.6 0 0 1 0 5.2h-2.3" fill="none" stroke="#d8202a" stroke-width="1.9"/>
    <!-- repel -->
    <rect x="22.5" y="199" width="5" height="12" fill="#ececf0" stroke="#b0b0b8" stroke-width=".6"/>
    <path d="M27 201l-3 4 3 4" fill="none" stroke="#888" stroke-width=".8"/>
    <path d="M28.2 202.6h2.3a2.6 2.6 0 0 1 0 5.2h-2.3" fill="none" stroke="#d8202a" stroke-width="1.9"/>
  </svg>
  <span class="ft" style="top:4.4px">Shape</span><span class="ft" style="top:4.4px;left:78.3px">F10</span>
  <span class="ft" style="top:19.9px">Smudge Brush</span>
  <span class="ft" style="top:35.4px">Roughen Brush</span>
  <span class="ft" style="top:50.9px">Free Transform</span>
  <span class="ft" style="top:66.4px">Smear</span>
  <span class="ft" style="top:81.9px">Twirl</span>
  <span class="ft" style="top:97.4px">Attract</span>
  <span class="ft" style="top:113.6px">Repel</span>
</div>
</body></html>
